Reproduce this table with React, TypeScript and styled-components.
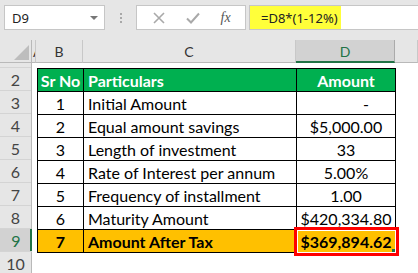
import React from 'react'
import styled, { createGlobalStyle } from 'styled-components'

const GlobalStyle = createGlobalStyle`
  html, body {
    margin: 0;
    padding: 0;
    background: #fff;
  }
  body {
    width: 418px;
    height: 273px;
    overflow: hidden;
    font-family: Lato, 'Liberation Sans', sans-serif;
  }
`

const Window = styled.div`
  width: 418px;
  height: 273px;
  display: flex;
  flex-direction: column;
  overflow: hidden;
  background: #fff;
`

// name box, buttons and formula input
const FormulaBar = styled.div`
  flex: none;
  height: 40px;
  box-sizing: border-box;
  padding: 5px 0 0 4px;
  display: flex;
  align-items: flex-start;
  background: #e6e6e6;
  font-family: 'Noto Sans', sans-serif;
  font-size: 13px;
  color: #222;
`

const NameBox = styled.div`
  width: 101px;
  height: 25px;
  box-sizing: border-box;
  border: 1px solid #c6c6c6;
  background: #fff;
  display: flex;
  align-items: center;
  justify-content: space-between;
  padding: 0 6px 0 7px;
`

const DropArrow = styled.span`
  width: 0;
  height: 0;
  border-left: 4px solid transparent;
  border-right: 4px solid transparent;
  border-top: 4px solid #777;
  margin-top: 1px;
`

const Grip = styled.div`
  width: 31px;
  height: 25px;
  display: flex;
  flex-direction: column;
  align-items: center;
  justify-content: center;
  gap: 2px;

  span {
    width: 2px;
    height: 2px;
    background: #a8a8a8;
  }
`

const FxButtons = styled.div`
  width: 110px;
  height: 25px;
  box-sizing: border-box;
  border: 1px solid #c6c6c6;
  background: #fff;
  display: flex;
  align-items: center;
  justify-content: space-around;
  padding: 0 4px 0 6px;
`

const FxLabel = styled.span`
  font-family: 'Liberation Serif', serif;
  font-style: italic;
  font-size: 14px;
  color: #555;
`

const FormulaInput = styled.div`
  flex: 1;
  height: 25px;
  margin-left: 3px;
  box-sizing: border-box;
  border: 1px solid #c6c6c6;
  border-right: 0;
  background: #fff;
  display: flex;
  align-items: stretch;
`

const Highlight = styled.span`
  width: 91px;
  background: #ffff3a;
  display: flex;
  align-items: center;
  padding-left: 11px;
  box-sizing: border-box;
`

const Sheet = styled.div`
  display: grid;
  grid-template-columns: 32px 4px 47px 213px 99px 1fr;
  grid-template-rows: 23px 5px repeat(9, 23px);
`

const Corner = styled.div`
  position: relative;
  background: #e6e6e6;
  border-right: 1px solid #b9b9b9;
  border-bottom: 1px solid #b9b9b9;
  box-sizing: border-box;

  &::after {
    content: '';
    position: absolute;
    right: 2px;
    bottom: 2px;
    border-left: 15px solid transparent;
    border-bottom: 15px solid #bdbdbd;
  }
`

const ColHeader = styled.div<{ $active?: boolean; $narrow?: boolean }>`
  box-sizing: border-box;
  overflow: hidden;
  display: flex;
  align-items: center;
  justify-content: ${({ $narrow }) => ($narrow ? 'flex-start' : 'center')};
  padding-left: ${({ $narrow }) => ($narrow ? '1px' : '0')};
  font-size: 14px;
  background: ${({ $active }) => ($active ? '#d2d2d2' : '#e6e6e6')};
  color: ${({ $active }) => ($active ? '#217346' : '#333')};
  border-right: 1px solid ${({ $active }) => ($active ? '#ababab' : '#c8c8c8')};
  border-bottom: ${({ $active }) =>
    $active ? '2px solid #217346' : '1px solid #b9b9b9'};
  padding-top: ${({ $active }) => ($active ? '1px' : '0')};
`

const RowHeaders = styled.div`
  grid-column: 1;
  grid-row: 2 / span 10;
  display: flex;
  flex-direction: column;
  background: #e6e6e6;
  border-right: 1px solid #b9b9b9;
`

const RowHeader = styled.div<{ $active?: boolean; $h: number }>`
  height: ${({ $h }) => $h}px;
  box-sizing: border-box;
  display: flex;
  align-items: center;
  justify-content: center;
  font-size: 16px;
  border-bottom: 1px solid #d4d4d4;
  background: ${({ $active }) => ($active ? '#d2d2d2' : 'transparent')};
  color: ${({ $active }) => ($active ? '#217346' : '#444')};
  box-shadow: ${({ $active }) => ($active ? 'inset -2px 0 0 #217346' : 'none')};
  margin-right: ${({ $active }) => ($active ? '-1px' : '0')};
`

const Table = styled.div`
  grid-column: 3 / span 3;
  grid-row: 3 / span 8;
  justify-self: start;
  align-self: start;
  margin-left: 1px;
  display: grid;
  grid-template-columns: 45px 212px 98px;
  grid-auto-rows: 22px;
  gap: 1px;
  padding: 1px;
  background: #000;
`

type Tone = 'head' | 'plain' | 'total'

const Cell = styled.div<{ $tone: Tone; $align: 'left' | 'center' | 'right' }>`
  position: relative;
  display: flex;
  align-items: center;
  white-space: nowrap;
  font-size: 16px;
  justify-content: ${({ $align }) =>
    $align === 'left' ? 'flex-start' : $align === 'right' ? 'flex-end' : 'center'};
  padding: ${({ $align }) =>
    $align === 'left' ? '0 0 0 4px' : $align === 'right' ? '0 26px 0 0' : '0'};
  background: ${({ $tone }) =>
    $tone === 'head' ? '#00b050' : $tone === 'total' ? '#ffc000' : '#fff'};
  color: ${({ $tone }) => ($tone === 'head' ? '#fff' : '#000')};
  font-weight: ${({ $tone }) => ($tone === 'plain' ? 400 : 700)};
`

const Marked = styled.span`
  position: absolute;
  left: -3px;
  top: -3px;
  right: -4px;
  bottom: -4px;
  border: 3px solid #ff0000;
  box-shadow: inset 0 0 0 1px #fff;

  &::after {
    content: '';
    position: absolute;
    right: 1px;
    bottom: 1px;
    width: 3px;
    height: 3px;
    background: #217346;
  }
`

const rows: [string, string, string][] = [
  ['1', 'Initial Amount', '-'],
  ['2', 'Equal amount savings', '$5,000.00'],
  ['3', 'Length of investment', '33'],
  ['4', 'Rate of Interest per annum', '5.00%'],
  ['5', 'Frequency of installment', '1.00'],
  ['6', 'Maturity Amount', '$420,334.80'],
]

const CrossIcon = () => (
  <svg width="12" height="12" viewBox="0 0 12 12">
    <path d="M1 1L11 11M11 1L1 11" stroke="#a9a9a9" strokeWidth="1.6" />
  </svg>
)

const CheckIcon = () => (
  <svg width="14" height="12" viewBox="0 0 14 12">
    <path d="M1 6.5L5 10.5L13 1.5" stroke="#a9a9a9" strokeWidth="2" fill="none" />
  </svg>
)

export default function App() {
  return (
    <Window>
      <GlobalStyle />
      <FormulaBar>
        <NameBox>
          <span>D9</span>
          <DropArrow />
        </NameBox>
        <Grip>
          <span />
          <span />
          <span />
        </Grip>
        <FxButtons>
          <CrossIcon />
          <CheckIcon />
          <FxLabel>fx</FxLabel>
        </FxButtons>
        <FormulaInput>
          <Highlight>=D8*(1-12%)</Highlight>
        </FormulaInput>
      </FormulaBar>
      <Sheet>
        <Corner />
        <ColHeader $narrow>A</ColHeader>
        <ColHeader>B</ColHeader>
        <ColHeader>C</ColHeader>
        <ColHeader $active>D</ColHeader>
        <ColHeader />
        <RowHeaders>
          <RowHeader $h={5} />
          {[2, 3, 4, 5, 6, 7, 8, 9, 10].map((n) => (
            <RowHeader key={n} $h={23} $active={n === 9}>
              {n}
            </RowHeader>
          ))}
        </RowHeaders>
        <Table>
          <Cell $tone="head" $align="center">Sr No</Cell>
          <Cell $tone="head" $align="left">Particulars</Cell>
          <Cell $tone="head" $align="center">Amount</Cell>
          {rows.map(([no, label, value]) => (
            <React.Fragment key={no}>
              <Cell $tone="plain" $align="center">{no}</Cell>
              <Cell $tone="plain" $align="left">{label}</Cell>
              <Cell $tone="plain" $align={value === '-' ? 'right' : 'center'}>
                {value}
              </Cell>
            </React.Fragment>
          ))}
          <Cell $tone="total" $align="center">7</Cell>
          <Cell $tone="total" $align="left">Amount After Tax</Cell>
          <Cell $tone="total" $align="center">
            $369,894.62
            <Marked />
          </Cell>
        </Table>
      </Sheet>
    </Window>
  )
}
